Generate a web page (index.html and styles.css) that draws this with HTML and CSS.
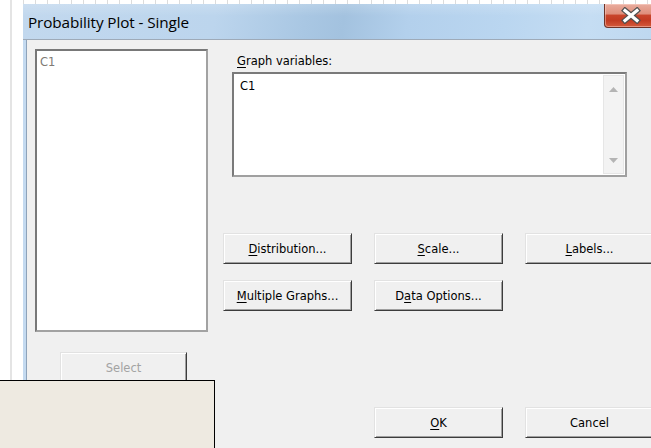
FILE: index.html
```html
<!DOCTYPE html>
<html lang="en">
<head>
<meta charset="utf-8">
<title>Probability Plot - Single</title>
<link rel="stylesheet" href="styles.css">
</head>
<body>
<div class="screen">
  <div class="sheet-top"></div>
  <div class="screen-row">
    <div class="gutter"></div>
    <div class="dialog">
      <div class="titlebar">
        <span class="title">Probability Plot - Single</span>
        <button class="close" type="button" aria-label="Close">
          <svg width="22" height="17" viewBox="0 0 22 17">
            <path d="M5 3.5 L17 13.5 M17 3.5 L5 13.5" stroke="#505050" stroke-width="5.6" stroke-linecap="square"/>
            <path d="M5 3.5 L17 13.5 M17 3.5 L5 13.5" stroke="#ffffff" stroke-width="3.2" stroke-linecap="square"/>
          </svg>
        </button>
      </div>
      <div class="dialog-body">
        <div class="client">
          <div class="col-left">
            <div class="varlist"><span class="var-item">C1</span></div>
            <button class="btn select" type="button" disabled>Select</button>
          </div>
          <div class="col-right">
            <div class="field-label"><u>G</u>raph variables:</div>
            <div class="textbox">
              <div class="textbox-text">C1</div>
              <div class="vscroll">
                <svg class="arrow" width="9" height="5" viewBox="0 0 9 5"><path d="M0 5 L4.5 0 L9 5 Z" fill="#b4b4b4"/></svg>
                <svg class="arrow" width="9" height="5" viewBox="0 0 9 5"><path d="M0 0 L4.5 5 L9 0 Z" fill="#b4b4b4"/></svg>
              </div>
            </div>
            <div class="btn-grid">
              <button class="btn" type="button"><u>D</u>istribution...</button>
              <button class="btn" type="button"><u>S</u>cale...</button>
              <button class="btn" type="button"><u>L</u>abels...</button>
              <button class="btn" type="button"><u>M</u>ultiple Graphs...</button>
              <button class="btn" type="button">D<u>a</u>ta Options...</button>
            </div>
            <div class="actions">
              <button class="btn" type="button"><u>O</u>K</button>
              <button class="btn" type="button">Cancel</button>
            </div>
          </div>
        </div>
      </div>
    </div>
  </div>
  <div class="note"></div>
</div>
</body>
</html>
```
FILE: styles.css
```css
* {
  box-sizing: border-box;
}

html, body {
  margin: 0;
  padding: 0;
}

body {
  width: 651px;
  height: 448px;
  overflow: hidden;
  background: #ffffff;
}

.screen {
  position: relative;
  width: 651px;
  height: 448px;
  overflow: hidden;
  display: flex;
  flex-direction: column;
  background:
    linear-gradient(to right, transparent 10px, #e4e4e4 10px, #e4e4e4 12px, transparent 12px),
    #ffffff;
}

/* worksheet grid peeking above the dialog */
.sheet-top {
  height: 4px;
  flex: none;
  background:
    linear-gradient(to right, transparent 10px, #e4e4e4 10px, #e4e4e4 12px, transparent 12px),
    repeating-linear-gradient(to right, #ffffff 0 11px, #dcdcdc 11px 12px);
}

.screen-row {
  flex: 1;
  display: flex;
  min-height: 0;
}

.gutter {
  width: 23px;
  flex: none;
}

.dialog {
  width: 641px;
  flex: none;
  display: flex;
  flex-direction: column;
}

.titlebar {
  height: 36px;
  flex: none;
  display: flex;
  align-items: flex-start;
  border-bottom: 1px solid #9eaab8;
  background:
    linear-gradient(180deg, rgba(255,255,255,0.18) 0, rgba(255,255,255,0) 12px),
    linear-gradient(100deg, #c2d8ee 0%, #bcd5ed 30%, #a9c7e3 44%, #a3c2df 50%, #b3d0ec 60%, #bad6f0 75%, #c5ddf3 88%, #bdd7ef 100%);
}

.title {
  padding: 1px 0 0 5px;
  line-height: 35px;
  font-family: "Open Sans", "Noto Sans", sans-serif;
  font-size: 15.3px;
  letter-spacing: -0.1px;
  color: #000000;
  white-space: nowrap;
}

.close {
  margin-left: auto;
  margin-right: 6px;
  width: 54px;
  height: 24px;
  padding: 0;
  display: flex;
  align-items: center;
  justify-content: center;
  border: 1px solid #6e3328;
  border-top: none;
  border-radius: 0 0 4px 4px;
  background:
    linear-gradient(180deg, #e9ad9f 0%, #df8f7c 42%, #c8442b 50%, #c23b22 72%, #d45a3c 100%);
  box-shadow: inset 0 0 0 1px rgba(255,220,210,0.45);
}

.close svg {
  display: block;
}

.dialog-body {
  flex: 1;
  display: flex;
  padding-left: 3px;
  background: #c4daf0;
}

.client {
  flex: 1;
  display: flex;
  gap: 15px;
  padding: 9px 0 0 8px;
  border-left: 1px solid #8ea3ba;
  background: #f0f0f0;
  font-family: "DejaVu Sans", sans-serif;
  font-size: 11.5px;
  color: #000000;
}

.col-left {
  width: 173px;
  flex: none;
  display: flex;
  flex-direction: column;
}

.varlist {
  height: 283px;
  padding: 4px 3px;
  line-height: 14px;
  background: #ffffff;
  border: 2px solid;
  border-color: #787878 #a2a2a2 #a2a2a2 #787878;
}

.var-item {
  color: #807a74;
}

.btn {
  height: 31px;
  padding: 0;
  font-family: "DejaVu Sans", sans-serif;
  font-size: 11.5px;
  color: #000000;
  background: #f0f0f0;
  border: 1px solid;
  border-color: #e2e2e2 #3c3c3c #3c3c3c #e2e2e2;
  box-shadow: inset 1px 1px 0 #ffffff, inset -1px -1px 0 #a0a0a0;
  text-align: center;
}

.btn u {
  text-decoration-thickness: 1px;
  text-underline-offset: 2px;
}

.select {
  width: 127px;
  margin: 20px 0 0 25px;
  color: #a3a3a3;
}

.col-right {
  width: 431px;
  flex: none;
  display: flex;
  flex-direction: column;
}

.field-label {
  margin: 5px 0 0 14px;
  line-height: 14px;
}

.field-label u {
  text-underline-offset: 2px;
}

.textbox {
  margin: 4px 0 0 9px;
  width: 395px;
  height: 105px;
  display: flex;
  background: #ffffff;
  border: 2px solid;
  border-color: #7a7a7a #a0a0a0 #a0a0a0 #7a7a7a;
}

.textbox-text {
  flex: 1;
  padding: 5px 0 0 6px;
  line-height: 14px;
}

.vscroll {
  width: 21px;
  margin: 1px 1px 1px 0;
  display: flex;
  flex-direction: column;
  align-items: center;
  justify-content: space-between;
  padding: 11px 0 10px;
  background: #f3f3f3;
  border: 1px solid #e6e6e6;
}

.arrow {
  display: block;
}

.btn-grid {
  margin-top: 56px;
  display: grid;
  grid-template-columns: repeat(3, 129px);
  column-gap: 22px;
  row-gap: 16px;
}

.actions {
  margin: 96px 0 0 151px;
  display: grid;
  grid-template-columns: repeat(2, 129px);
  column-gap: 22px;
}

/* sticky note lying over the lower-left corner */
.note {
  position: absolute;
  left: 0;
  top: 380px;
  width: 215px;
  height: 68px;
  background: #eeeae1;
  border-top: 1px solid #000000;
  border-right: 1px solid #000000;
}
```
